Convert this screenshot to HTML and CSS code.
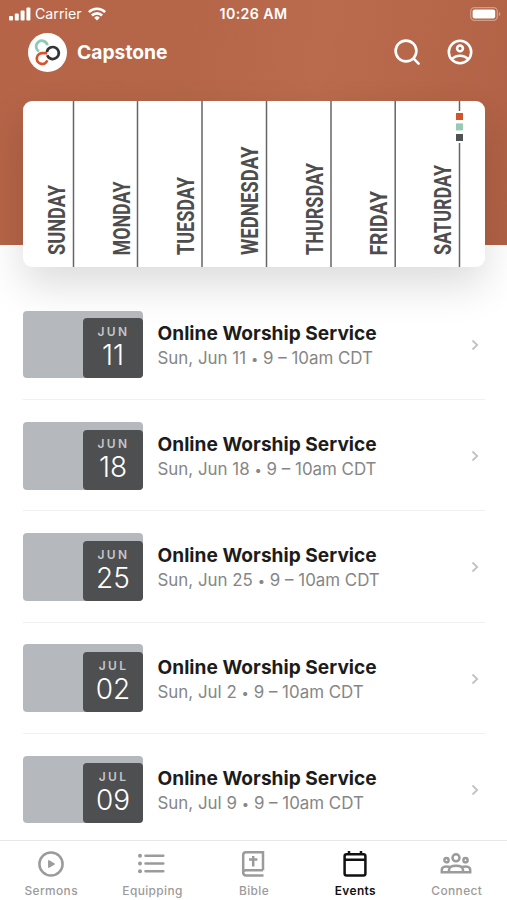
FILE: index.html
```html
<!DOCTYPE html>
<html lang="en">
<head>
<meta charset="utf-8">
<title>Capstone Events</title>
<link rel="stylesheet" href="styles.css">
</head>
<body>
<div class="app">
  <header class="hero">
    <div class="status">
      <div class="carrier">
        <svg class="signal" width="22" height="14" viewBox="0 0 22 14" fill="#fff"><rect x="0" y="9" width="4" height="4.5" rx="1"/><rect x="5.8" y="6.5" width="4" height="7" rx="1"/><rect x="11.6" y="3.5" width="4" height="10" rx="1"/><rect x="17.4" y="0.5" width="4" height="13" rx="1"/></svg>
        <span class="carrier-name">Carrier</span>
        <svg class="wifi" width="18" height="14" viewBox="0 0 18 14" fill="none" stroke="#fff" stroke-width="2.6"><path d="M.9 5.1A11.5 11.5 0 0 1 17.1 5.1M3.9 8.5A7.2 7.2 0 0 1 14.1 8.5"/><path d="M9 13.5L6.2 10.7A4 4 0 0 1 11.8 10.7Z" fill="#fff" stroke="none"/></svg>
      </div>
      <span class="clock">10:26 AM</span>
      <svg class="battery" width="31" height="14" viewBox="0 0 31 14"><rect x=".7" y=".7" width="26.6" height="12.6" rx="3.8" fill="none" stroke="#d39c85" stroke-width="1.3"/><rect x="2.6" y="2.6" width="22.6" height="8.8" rx="2" fill="#fff"/><path d="M28.8 4.8q1.6.7 1.6 2.2t-1.6 2.2z" fill="#d39c85"/></svg>
    </div>
    <div class="bar">
      <div class="logo">
        <svg width="39" height="39" viewBox="0 0 39 39" fill="none" stroke-width="2.7"><path d="M11 18.4A5.7 5.7 0 1 1 19.4 12.2" stroke="#8fcab4"/><path d="M19.2 20.2H13.6A5.4 5.4 0 1 0 19.3 27.4" stroke="#d6542c"/><path d="M18.9 18.9A6 6 0 1 1 19.2 22.2" stroke="#333638"/></svg>
      </div>
      <span class="brand">Capstone</span>
      <svg class="search" width="28" height="28" viewBox="0 0 28 28" fill="none" stroke="#fff" stroke-width="2.6" stroke-linecap="round"><circle cx="13" cy="13" r="10.4"/><path d="M20.7 20.7L25.6 25.6"/></svg>
      <svg class="profile" width="26" height="26" viewBox="0 0 26 26" fill="none" stroke="#fff" stroke-width="2.6"><circle cx="13" cy="13" r="11.2"/><circle cx="13" cy="9.4" r="2.9"/><path d="M4.8 20.2Q8 16.8 13 16.8T21.2 20.2"/></svg>
    </div>
  </header>

  <div class="week">
    <svg width="462" height="166" viewBox="23 101 462 166">
      <g stroke="#656565" stroke-width="1.5"><path d="M73.5 101V267M137.5 101V267M202 101V267M266.5 101V267M331 101V267M395.2 101V267M459.5 101V111M459.5 143V267"/></g>
      <rect x="456" y="113" width="7" height="7" fill="#d3532c"/><rect x="456" y="123.4" width="7" height="7" fill="#98c9b5"/><rect x="456" y="134" width="7" height="7" fill="#505253"/>
      <g class="days">
        <text transform="translate(65.3 255) rotate(-90)" textLength="70" lengthAdjust="spacingAndGlyphs">SUNDAY</text>
        <text transform="translate(129.6 255.5) rotate(-90)" textLength="74" lengthAdjust="spacingAndGlyphs">MONDAY</text>
        <text transform="translate(193.8 255) rotate(-90)" textLength="78" lengthAdjust="spacingAndGlyphs">TUESDAY</text>
        <text transform="translate(258.2 255) rotate(-90)" textLength="108.5" lengthAdjust="spacingAndGlyphs">WEDNESDAY</text>
        <text transform="translate(322.6 255) rotate(-90)" textLength="92" lengthAdjust="spacingAndGlyphs">THURSDAY</text>
        <text transform="translate(386.8 255.5) rotate(-90)" textLength="64.5" lengthAdjust="spacingAndGlyphs">FRIDAY</text>
        <text transform="translate(451.2 255) rotate(-90)" textLength="90" lengthAdjust="spacingAndGlyphs">SATURDAY</text>
      </g>
    </svg>
  </div>

  <main class="list">
    <article class="event">
      <div class="thumb"><div class="date"><span class="month">JUN</span><span class="day">11</span></div></div>
      <div class="info"><h2>Online Worship Service</h2><p>Sun, Jun 11 <i>•</i> 9 – 10am CDT</p></div>
      <svg class="chevron" width="8" height="12" viewBox="0 0 8 12"><path d="M1.5 1.5L6.2 6L1.5 10.5"/></svg>
    </article>
    <article class="event">
      <div class="thumb"><div class="date"><span class="month">JUN</span><span class="day">18</span></div></div>
      <div class="info"><h2>Online Worship Service</h2><p>Sun, Jun 18 <i>•</i> 9 – 10am CDT</p></div>
      <svg class="chevron" width="8" height="12" viewBox="0 0 8 12"><path d="M1.5 1.5L6.2 6L1.5 10.5"/></svg>
    </article>
    <article class="event">
      <div class="thumb"><div class="date"><span class="month">JUN</span><span class="day">25</span></div></div>
      <div class="info"><h2>Online Worship Service</h2><p>Sun, Jun 25 <i>•</i> 9 – 10am CDT</p></div>
      <svg class="chevron" width="8" height="12" viewBox="0 0 8 12"><path d="M1.5 1.5L6.2 6L1.5 10.5"/></svg>
    </article>
    <article class="event">
      <div class="thumb"><div class="date"><span class="month">JUL</span><span class="day">02</span></div></div>
      <div class="info"><h2>Online Worship Service</h2><p>Sun, Jul 2 <i>•</i> 9 – 10am CDT</p></div>
      <svg class="chevron" width="8" height="12" viewBox="0 0 8 12"><path d="M1.5 1.5L6.2 6L1.5 10.5"/></svg>
    </article>
    <article class="event">
      <div class="thumb"><div class="date"><span class="month">JUL</span><span class="day">09</span></div></div>
      <div class="info"><h2>Online Worship Service</h2><p>Sun, Jul 9 <i>•</i> 9 – 10am CDT</p></div>
      <svg class="chevron" width="8" height="12" viewBox="0 0 8 12"><path d="M1.5 1.5L6.2 6L1.5 10.5"/></svg>
    </article>
  </main>

  <nav class="tabs">
    <a class="tab"><svg width="32" height="28" viewBox="0 0 32 28"><circle cx="16" cy="14" r="11.6"/><path d="M13.6 10.4L19.6 14L13.6 17.6Z" fill="currentColor" stroke-width="1"/></svg><span>Sermons</span></a>
    <a class="tab"><svg width="32" height="28" viewBox="0 0 32 28"><path d="M9.5 5.8H27.3M9.5 13.5H27.3M9.5 21.2H27.3" stroke-linecap="round"/><g fill="currentColor" stroke="none"><circle cx="4" cy="5.8" r="2"/><circle cx="4" cy="13.5" r="2"/><circle cx="4" cy="21.2" r="2"/></g></svg><span>Equipping</span></a>
    <a class="tab"><svg width="32" height="28" viewBox="0 0 32 28"><path d="M26 20.2V2.2H9Q6.2 2.2 6.2 5V22.5Q6.2 25.4 9 25.4H26.5M26 20.2H9Q6.2 20.2 6.2 22.8M16.2 6V16.5M12 9.6H20.4"/></svg><span>Bible</span></a>
    <a class="tab active"><svg width="32" height="28" viewBox="0 0 32 28"><rect x="5.6" y="4.2" width="20.8" height="21.2" rx="2"/><path d="M5.6 9.8H26.4M10 1V4M22 1V4"/></svg><span>Events</span></a>
    <a class="tab"><svg width="32" height="28" viewBox="0 0 32 28"><circle cx="16" cy="7.8" r="3.5"/><circle cx="6.5" cy="10.2" r="2.1"/><circle cx="25.5" cy="10.2" r="2.1"/><path d="M9 22.2V20Q9 15.8 16 15.8T23 20V22.2M10 17Q2 15.4 1.8 20V22.2H30.2V20Q30 15.4 22 17"/></svg><span>Connect</span></a>
  </nav>
</div>
</body>
</html>
```

FILE: styles.css
```css
* { box-sizing: border-box; }
body { margin: 0; background: #fff; font-family: Inter, "Liberation Sans", sans-serif; }
svg { display: block; flex: none; }
.app { width: 507px; height: 900px; overflow: hidden; display: flex; flex-direction: column; }
.hero { height: 245px; flex: none; color: #fff; background: linear-gradient(100deg, #b66447 0%, #b56648 35%, #bb6b4d 60%, #b16145 100%); }
.status { height: 27px; display: grid; grid-template-columns: 1fr auto 1fr; align-items: center; padding: 0 6px 0 9px; }
.carrier { display: flex; align-items: center; }
.carrier-name { font-size: 14.2px; margin: 0 6px 0 4px; }
.clock { font-size: 14.2px; font-weight: 600; letter-spacing: .4px; margin-left: -3px; }
.battery { justify-self: end; }
.bar { height: 50px; display: flex; align-items: center; padding: 0 34px 0 28px; }
.logo { width: 39px; height: 39px; border-radius: 50%; background: #fff; }
.brand { flex: 1; margin-left: 10px; font-size: 19.3px; font-weight: 700; }
.profile { margin-left: 26px; }
.week { width: 462px; height: 166px; flex: none; margin: -144px 0 0 23px; background: #fff; border-radius: 9px; overflow: hidden; box-shadow: 0 18px 42px rgba(0, 0, 0, .14); }
.days text { font: 700 24.5px Roboto, sans-serif; fill: #4d4d4d; }
.list { height: 573px; flex: none; padding: 22px 22px 0 23px; overflow: hidden; }
.event { height: 111.2px; padding-top: 1px; display: flex; align-items: center; border-bottom: 1.5px solid #f0f0f0; }
.event:last-child { border-bottom-color: transparent; }
.thumb { width: 120px; height: 67.5px; border-radius: 4px; background: #b5b8bd; display: flex; justify-content: flex-end; align-items: flex-end; }
.date { width: 60px; height: 60px; border-radius: 4px; background: #4d4f51; display: flex; flex-direction: column; align-items: center; }
.month { font-size: 12px; line-height: 15px; margin-top: 6px; padding-left: 1px; font-weight: 600; letter-spacing: 2.3px; color: #c5c6c8; }
.day { font-size: 28px; line-height: 33px; font-weight: 350; color: #fff; }
.info { flex: 1; margin-left: 14.5px; padding-top: 4px; }
.info h2 { margin: 0; font-size: 19.1px; line-height: 25px; font-weight: 700; letter-spacing: .03px; color: #1c1c1c; }
.info p { margin: 0; font-size: 16.9px; line-height: 25px; color: #868686; }
.info i { display: inline-block; width: 7.5px; font-size: 13px; font-style: normal; text-align: center; }
.chevron { margin: 1px 6px 0 0; fill: none; stroke: #c2c2c2; stroke-width: 1.8; }
.tabs { height: 60px; flex: none; display: grid; grid-template-columns: repeat(5, 1fr); border-top: 1.5px solid #e7e7e7; background: #fff; }
.tab { display: flex; flex-direction: column; align-items: center; padding-top: 8.5px; color: #9b9b9b; font-size: 11.9px; font-weight: 500; letter-spacing: .4px; }
.tab svg { fill: none; stroke: currentColor; stroke-width: 2.5; }
.tab span { line-height: 16px; margin-top: 5px; padding-left: 1px; }
.tab.active { color: #111; font-weight: 600; }
```
